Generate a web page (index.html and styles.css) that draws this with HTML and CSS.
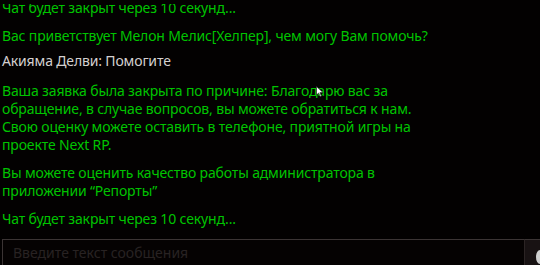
FILE: index.html
```html
<!DOCTYPE html>
<html>
<head>
<meta charset="utf-8">
<link rel="stylesheet" href="styles.css">
</head>
<body>
<div class="chat">
  <div class="scroll">
    <div class="messages">
      <p class="msg green">Чат будет закрыт через 10 секунд...</p>
      <p class="msg green">Вас приветствует Мелон Мелис[Хелпер], чем могу Вам помочь?</p>
      <p class="msg gray">Акияма Делви: Помогите</p>
      <p class="msg green">Ваша заявка была закрыта по причине: Благодарю вас за<br>обращение, в случае вопросов, вы можете обратиться к нам.<br>Свою оценку можете оставить в телефоне, приятной игры на<br>проекте Next RP.</p>
      <p class="msg green">Вы можете оценить качество работы администратора в<br>приложении “Репорты”</p>
      <p class="msg green">Чат будет закрыт через 10 секунд...</p>
    </div>
  </div>
  <div class="inputbar">
    <div class="field">Введите текст сообщения</div>
    <div class="send"><span class="dot"></span></div>
  </div>
</div>
<svg class="cursor" width="8" height="11" viewBox="0 0 8 11"><path d="M0.5 0.5 L0.5 9 L2.6 7 L4.2 10.5 L5.4 10 L3.9 6.6 L7 6.6 Z" fill="#fff" stroke="#222" stroke-width="0.6"/></svg>
</body>
</html>
```
FILE: styles.css
```css
html, body {
  margin: 0;
  padding: 0;
  background: #030101;
  width: 540px;
  height: 265px;
  overflow: hidden;
}
body {
  font-family: "Noto Sans", sans-serif;
  font-size: 14px;
  line-height: 18px;
  letter-spacing: -0.15px;
}
.chat {
  display: flex;
  flex-direction: column;
  height: 265px;
}
.scroll {
  margin-top: 4px;
  overflow: hidden;
}
.messages {
  display: flex;
  flex-direction: column;
  gap: 10px;
  padding: 0 2px;
  margin-top: -5px;
}
.msg {
  margin: 0;
}
.green { color: #00c400; }
.gray {
  color: #d4d0d0;
  margin-top: -3px;
  margin-bottom: 2px;
}
.inputbar {
  margin-top: auto;
  display: flex;
  height: 26px;
}
.field {
  flex: 1;
  margin-left: 2px;
  border: 1px solid #3b3434;
  border-right: none;
  border-bottom: none;
  background: #050202;
  color: #282222;
  padding: 4px 10px;
  font-size: 14px;
  letter-spacing: 0;
}
.send {
  width: 15px;
  background: #181213;
  border-top: 1px solid #3b3434;
  border-left: 1px solid #2b2424;
  position: relative;
}
.dot {
  position: absolute;
  right: -4px;
  top: 10px;
  width: 8px;
  height: 14px;
  border-radius: 50%;
  background: #d0d0d0;
}
.cursor {
  position: absolute;
  left: 316px;
  top: 86px;
}
```
